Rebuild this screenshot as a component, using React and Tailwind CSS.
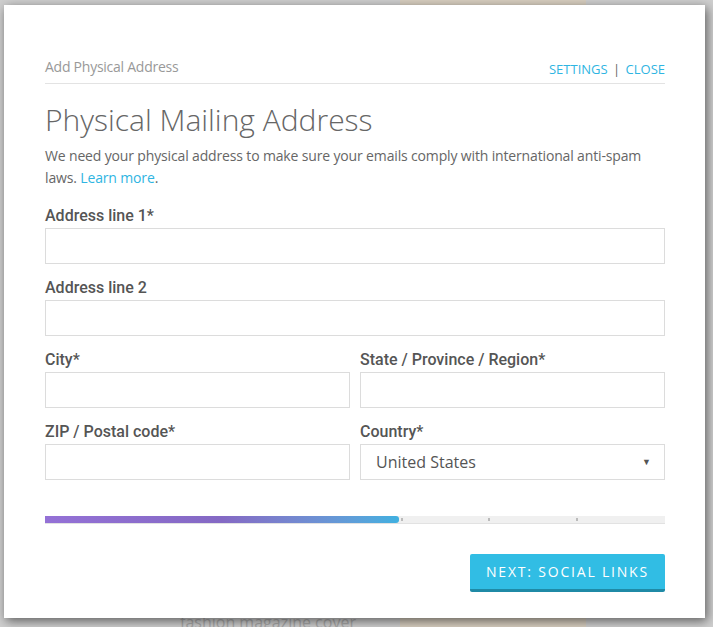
export default function App() {
  const font = { fontFamily: '"Open Sans", "Noto Sans", sans-serif' };
  const labelFont = { fontFamily: 'Roboto, "Open Sans", sans-serif' };
  const Label = ({ children }) => (
    <div className="text-[16px] leading-[24px] font-medium text-[#555]" style={labelFont}>{children}</div>
  );
  const Input = () => (
    <div className="h-[36px] border border-[#dcdcdc] bg-white" />
  );
  return (
    <div className="w-[713px] h-[627px] bg-[#cfcfcf] pt-[5px] pl-[4px] overflow-hidden relative" style={font}>
      <div className="absolute left-[400px] top-0 w-[186px] h-[627px] bg-[#d8cfc0]" />
      <div className="absolute left-[180px] top-[612px] text-[#aaa] text-[16px] leading-[20px]">fashion magazine cover</div>
      <div className="relative w-[701px] h-[613px] bg-white shadow-[2px_3px_10px_rgba(0,0,0,0.55)] pt-[52px] pl-[41px] pr-[40px]">
        <div className="flex justify-between items-end border-b border-[#e3e3e3] pb-[6px]">
          <div className="text-[14px] leading-[20px] text-[#999] tracking-[-0.25px]">Add Physical Address</div>
          <div className="text-[13px] leading-[20px] text-[#2fb5e2] mb-[-2px]">
            SETTINGS <span className="text-[#666] mx-[2px]">|</span> CLOSE
          </div>
        </div>
        <h1 className="mt-[16px] text-[30px] leading-[40px] font-light text-[#666]">Physical Mailing Address</h1>
        <p className="mt-[5px] text-[14px] leading-[22px] text-[#666] tracking-[-0.15px]">
          We need your physical address to make sure your emails comply with international anti-spam laws.{" "}
          <span className="text-[#2fb5e2]">Learn more</span>.
        </p>
        <div className="mt-[15px] flex flex-col gap-[12px]">
          <div>
            <Label>Address line 1*</Label>
            <Input />
          </div>
          <div>
            <Label>Address line 2</Label>
            <Input />
          </div>
          <div className="grid grid-cols-2 gap-x-[10px]">
            <div>
              <Label>City*</Label>
              <Input />
            </div>
            <div>
              <Label>State / Province / Region*</Label>
              <Input />
            </div>
          </div>
          <div className="grid grid-cols-2 gap-x-[10px]">
            <div>
              <Label>ZIP / Postal code*</Label>
              <Input />
            </div>
            <div>
              <Label>Country*</Label>
              <div className="h-[36px] border border-[#dcdcdc] bg-white flex items-center justify-between pl-[15px] pr-[13px]">
                <span className="text-[16px] text-[#555]">United States</span>
                <span className="text-[9px] text-[#555]">▼</span>
              </div>
            </div>
          </div>
        </div>
        <div className="relative mt-[36px] h-[8px] bg-[#f0f0f0] border-b border-[#e2e2e2]">
          <div className="absolute left-0 top-0 h-[7px] w-[57.14%] rounded-r-[3px] bg-gradient-to-r from-[#9471d6] via-[#8469c4] to-[#3fb0e0]" />
          <div className="absolute left-[57.4%] top-[2px] w-[2px] h-[3px] bg-[#bbb]" />
          <div className="absolute left-[71.4%] top-[2px] w-[2px] h-[3px] bg-[#bbb]" />
          <div className="absolute left-[85.7%] top-[2px] w-[2px] h-[3px] bg-[#bbb]" />
        </div>
        <div className="mt-[30px] flex justify-end">
          <button className="w-[195px] h-[38px] bg-[#31bde4] border-b-[3px] border-[#1f8aa6] rounded-[2px] text-white text-[14px] font-medium tracking-[1.8px]">
            NEXT: SOCIAL LINKS
          </button>
        </div>
      </div>
    </div>
  );
}
